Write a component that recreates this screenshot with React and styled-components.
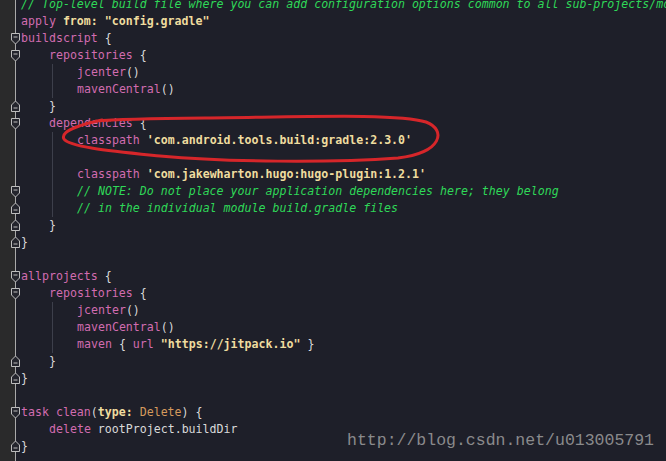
import React from 'react';
import styled, { createGlobalStyle } from 'styled-components';

const GlobalStyle = createGlobalStyle`
	html, body {
		margin: 0;
		padding: 0;
		background: #1e1f29;
	}
`;

const lines = [
	{ lvl: 0, t: [['cm', '// Top-level build file where you can add configuration options common to all sub-projects/modules.']] },
	{ lvl: 0, t: [['kw', 'apply'], ['p', ' '], ['key', 'from:'], ['p', ' '], ['str', '"config.gradle"']] },
	{ lvl: 0, fold: 'down', t: [['kw', 'buildscript'], ['p', ' {']] },
	{ lvl: 1, fold: 'down', t: [['kw', 'repositories'], ['p', ' {']] },
	{ lvl: 2, guide: true, t: [['kw', 'jcenter'], ['p', '()']] },
	{ lvl: 2, guide: true, t: [['kw', 'mavenCentral'], ['p', '()']] },
	{ lvl: 1, fold: 'up', t: [['p', '}']] },
	{ lvl: 1, fold: 'down', t: [['kw', 'dependencies'], ['p', ' {']] },
	{ lvl: 2, guide: true, t: [['kw', 'classpath'], ['p', ' '], ['str', "'com.android.tools.build:gradle:2.3.0'"]] },
	{ lvl: 2, guide: true, t: [] },
	{ lvl: 2, guide: true, t: [['kw', 'classpath'], ['p', ' '], ['str', "'com.jakewharton.hugo:hugo-plugin:1.2.1'"]] },
	{ lvl: 2, guide: true, fold: 'down', t: [['cm', '// NOTE: Do not place your application dependencies here; they belong']] },
	{ lvl: 2, guide: true, fold: 'up', t: [['cm', '// in the individual module build.gradle files']] },
	{ lvl: 1, fold: 'up', t: [['p', '}']] },
	{ lvl: 0, fold: 'up', t: [['p', '}']] },
	{ lvl: 0, t: [] },
	{ lvl: 0, fold: 'down', t: [['kw', 'allprojects'], ['p', ' {']] },
	{ lvl: 1, fold: 'down', t: [['kw', 'repositories'], ['p', ' {']] },
	{ lvl: 2, guide: true, t: [['kw', 'jcenter'], ['p', '()']] },
	{ lvl: 2, guide: true, t: [['kw', 'mavenCentral'], ['p', '()']] },
	{ lvl: 2, guide: true, t: [['kw', 'maven'], ['p', ' { '], ['kw', 'url'], ['p', ' '], ['str', '"https://jitpack.io"'], ['p', ' }']] },
	{ lvl: 1, fold: 'up', t: [['p', '}']] },
	{ lvl: 0, fold: 'up', t: [['p', '}']] },
	{ lvl: 0, t: [] },
	{ lvl: 0, fold: 'down', t: [['kw', 'task'], ['kw', ' clean'], ['p', '('], ['key', 'type:'], ['p', ' '], ['cls', 'Delete'], ['p', ') {']] },
	{ lvl: 1, t: [['kw', 'delete'], ['id', ' rootProject.buildDir']] },
	{ lvl: 0, fold: 'up', t: [['p', '}']] },
];

const FoldIcon = ({ dir }) => (
	<svg width="11" height="13" viewBox="0 0 11 13">
		{dir === 'down' ? (
			<path d="M1.5 1.5 H9.5 V8 L5.5 12 L1.5 8 Z" fill="#24252d" stroke="#bdbdbd" strokeWidth="1" />
		) : (
			<path d="M1.5 11.5 H9.5 V5 L5.5 1 L1.5 5 Z" fill="#24252d" stroke="#bdbdbd" strokeWidth="1" />
		)}
		<path d={dir === 'down' ? 'M3.5 5 H7.5' : 'M3.5 8 H7.5'} stroke="#bdbdbd" strokeWidth="1" />
	</svg>
);

const App = () => {
	return (
		<>
			<GlobalStyle />
			<Editor>
				<Code>
					{lines.map((line, i) => (
						<Row key={i}>
							<Fold>{line.fold && <FoldIcon dir={line.fold} />}</Fold>
							{Array.from({ length: line.lvl }).map((_, k) => (
								<Indent key={k} $guide={line.guide && k === 1} />
							))}
							{line.t.map(([type, text], k) => (
								<Token key={k} $type={type}>
									{text}
								</Token>
							))}
						</Row>
					))}
				</Code>

				<Mark viewBox="0 0 666 461" width="666" height="461">
					<path
						d="M102 120 C88 123 59 130 64 139 C69 147 112 151 160 156 C225 162 330 163 398 158 C442 153 447 130 426 122 C398 113 300 117 205 118 C160 118.5 120 119 96 121"
						fill="none"
						stroke="#d6262a"
						strokeWidth="3"
						strokeLinecap="round"
					/>
				</Mark>

				<Watermark>http://blog.csdn.net/u013005791</Watermark>
			</Editor>
		</>
	);
};

export default App;

const palette = {
	kw: '#d26cb0',
	str: '#efdc9f',
	key: '#efdc9f',
	cm: '#2fd858',
	p: '#d9d9d9',
	cls: '#d59a5d',
	id: '#d9d9d9',
};

const Editor = styled.div`
	position: relative;
	width: 666px;
	height: 461px;
	overflow: hidden;
	background: linear-gradient(
		to right,
		#2a2a2b 0,
		#2a2a2b 15px,
		#a9a9a9 15px,
		#a9a9a9 16px,
		#1e1f29 16px
	);
`;

const Code = styled.div`
	margin-top: -4px;
	font-family: 'DejaVu Sans Mono', 'Liberation Mono', monospace;
	font-size: 11.6px;
	line-height: 17px;
	white-space: pre;
`;

const Row = styled.div`
	display: flex;
	align-items: center;
	height: 17px;
`;

const Fold = styled.span`
	display: flex;
	align-items: center;
	width: 21px;
	height: 17px;
	padding-left: 10px;
	box-sizing: border-box;
	flex-shrink: 0;
`;

const Indent = styled.span`
	display: inline-block;
	width: 28px;
	height: 17px;
	flex-shrink: 0;
	background: ${({ $guide }) =>
		$guide
			? 'linear-gradient(to right, transparent 3px, #3d3f4b 3px, #3d3f4b 4px, transparent 4px)'
			: 'none'};
`;

const Token = styled.span`
	color: ${({ $type }) => palette[$type]};
	font-weight: ${({ $type }) => ($type === 'str' || $type === 'key' ? 700 : 400)};
	font-style: ${({ $type }) => ($type === 'cm' ? 'italic' : 'normal')};
`;

const Mark = styled.svg`
	position: absolute;
	top: 0;
	left: 0;
	pointer-events: none;
`;

const Watermark = styled.div`
	position: absolute;
	right: 12px;
	bottom: 11px;
	font-family: 'Liberation Mono', monospace;
	font-size: 16.5px;
	color: #8a8a8c;
`;
